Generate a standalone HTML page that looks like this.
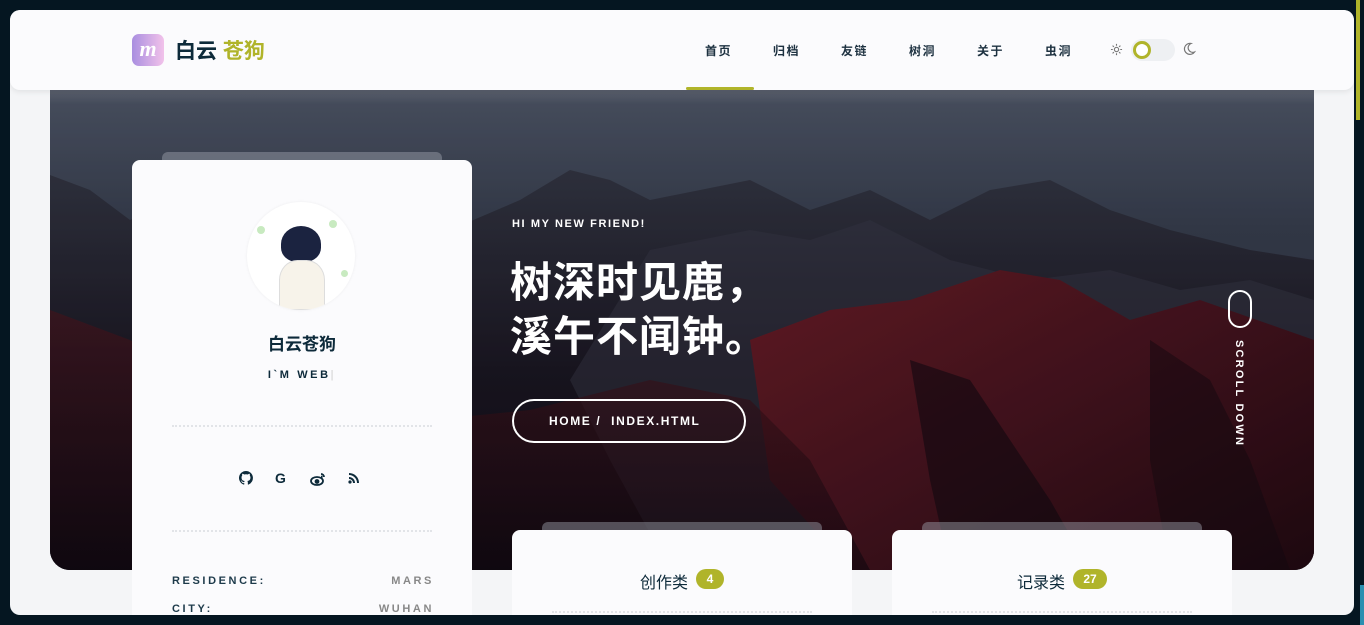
<!DOCTYPE html>
<html><head><meta charset="utf-8"><style>
*{margin:0;padding:0;box-sizing:border-box}
body{width:1364px;height:625px;overflow:hidden;background:#051621;font-family:"Liberation Sans","Noto Sans CJK SC",sans-serif;position:relative}
.page{position:absolute;left:10px;top:10px;width:1344px;height:605px;background:#f4f5f7;border-radius:10px;overflow:hidden}
.hero{position:absolute;left:40px;top:70px;width:1264px;height:490px;border-radius:0 0 20px 20px;overflow:hidden;background:#1a1822}
.hdr{position:absolute;left:0;top:0;width:1344px;height:80px;background:#fbfbfd;border-radius:10px;box-shadow:0 2px 6px rgba(0,0,0,.08)}
.logo{position:absolute;left:122px;top:24px;width:32px;height:32px;border-radius:7px;background:linear-gradient(90deg,#a98ee0,#f2c2ea);color:#fff;font:italic bold 22px "Liberation Serif",serif;text-align:center;line-height:30px}
.brand{position:absolute;left:165px;top:25px;font-size:21px;font-weight:bold;color:#0d2a3a}
.brand span{color:#b0b42a}
.nav a{position:absolute;top:32px;font-size:12px;color:#1d3140;letter-spacing:1.5px;text-decoration:none;font-weight:bold}
.ul{position:absolute;left:676px;top:77px;width:68px;height:3px;background:#b0b42a;border-radius:2px}
.tog{position:absolute;left:1121px;top:29px;width:44px;height:22px;border-radius:11px;background:#eef0f3}
.tog i{position:absolute;left:2px;top:2px;width:18px;height:18px;border-radius:50%;border:3px solid #b0b42a;background:#fff}
.card{position:absolute;background:#fbfbfd;border-radius:8px}
.ghost{position:absolute;background:rgba(160,165,175,.45);border-radius:6px 6px 0 0}
.dot{position:absolute;border-top:2px dotted #e2e4e8}
.lab{position:absolute;font-size:11px;font-weight:bold;letter-spacing:2.6px}
</style></head><body>
<div class="page">
<div class="hero">
<svg width="1264" height="490" viewBox="0 0 1264 490">
<defs>
<linearGradient id="sky" x1="0" y1="0" x2="0" y2="1"><stop offset="0" stop-color="#7a808e"/><stop offset=".05" stop-color="#50586a"/><stop offset=".3" stop-color="#3a4152"/><stop offset="1" stop-color="#2a2e3c"/></linearGradient>
<linearGradient id="mt" x1="0" y1="0" x2="0" y2="1"><stop offset="0" stop-color="#353846"/><stop offset=".5" stop-color="#1c1824"/><stop offset="1" stop-color="#0e0b13"/></linearGradient>
<linearGradient id="red" x1="0" y1="0" x2="1" y2="1"><stop offset="0" stop-color="#6e1e28"/><stop offset=".5" stop-color="#481420"/><stop offset="1" stop-color="#220a12"/></linearGradient>
<linearGradient id="red2" x1="0" y1="0" x2="0" y2="1"><stop offset="0" stop-color="#4e1620"/><stop offset="1" stop-color="#140912"/></linearGradient>
</defs>
<rect width="1264" height="490" fill="url(#sky)"/>
<path d="M0 95 L40 110 L80 140 L130 120 L200 150 L300 170 L400 150 L470 120 L520 90 L560 100 L600 120 L650 110 L700 100 L760 130 L820 110 L880 140 L940 110 L1000 100 L1060 130 L1120 150 L1200 170 L1264 180 L1264 490 L0 490Z" fill="url(#mt)"/>
<path d="M600 170 L700 150 L760 160 L820 140 L900 180 L980 200 L1060 190 L1130 210 L1200 200 L1264 220 L1264 490 L620 490 L560 380 L520 300Z" fill="#3a3a4a" opacity=".5"/>
<path d="M700 260 L780 230 L860 220 L950 190 L1010 200 L1080 240 L1150 220 L1264 260 L1264 490 L800 490 L720 400Z" fill="url(#red)"/>
<path d="M0 230 L80 260 L150 300 L250 330 L380 340 L480 330 L600 300 L700 320 L760 380 L820 490 L0 490Z" fill="url(#red2)" opacity=".65"/>
<path d="M860 280 L920 300 L960 360 L1000 420 L1040 490 L900 490 L880 400Z" fill="#120a12" opacity=".6"/>
<path d="M1100 260 L1160 300 L1200 380 L1240 490 L1120 490 L1100 380Z" fill="#150a12" opacity=".5"/>
<rect width="1264" height="490" fill="#000" opacity=".15"/>
</svg>
</div>
<div class="hdr">
<div class="logo">m</div>
<div class="brand">白云 <span>苍狗</span></div>
<div class="nav">
<a style="left:695px">首页</a><a style="left:763px">归档</a><a style="left:831px">友链</a><a style="left:899px">树洞</a><a style="left:967px">关于</a><a style="left:1035px">虫洞</a>
</div>
<div class="ul"></div>
<svg style="position:absolute;left:1100px;top:33px" width="13" height="13" viewBox="0 0 14 14" fill="none" stroke="#777" stroke-width="1.2"><circle cx="7" cy="7" r="2.3"/><path d="M7 1v2M7 11v2M1 7h2M11 7h2M2.8 2.8l1.4 1.4M9.8 9.8l1.4 1.4M2.8 11.2l1.4-1.4M9.8 4.2l1.4-1.4"/></svg>
<div class="tog"><i></i></div>
<svg style="position:absolute;left:1172px;top:32px" width="14" height="14" viewBox="0 0 14 14" fill="none" stroke="#777" stroke-width="1.2"><path d="M9 1.5A5.5 5.5 0 1 0 12.5 10 4.5 4.5 0 0 1 9 1.5z"/></svg>
</div>

<div class="ghost" style="left:152px;top:142px;width:280px;height:12px"></div>
<div class="card" style="left:122px;top:150px;width:340px;height:470px"></div>
<div style="position:absolute;left:237px;top:192px;width:108px;height:108px;border-radius:50%;background:#fff;box-shadow:0 0 3px rgba(0,0,0,.06);overflow:hidden">
<div style="position:absolute;left:34px;top:24px;width:40px;height:36px;border-radius:50% 50% 40% 40%;background:#1b2340"></div>
<div style="position:absolute;left:32px;top:58px;width:46px;height:50px;border-radius:40% 40% 0 0;background:#f7f3ea;border:1px solid #ddd"></div>
<div style="position:absolute;left:10px;top:24px;width:8px;height:8px;border-radius:50%;background:#c8eac0"></div>
<div style="position:absolute;left:82px;top:18px;width:8px;height:8px;border-radius:50%;background:#c8eac0"></div>
<div style="position:absolute;left:94px;top:68px;width:7px;height:7px;border-radius:50%;background:#c8eac0"></div>
</div>
<div style="position:absolute;left:122px;top:320px;width:340px;text-align:center;font-size:17px;font-weight:bold;color:#0d2a3a">白云苍狗</div>
<div style="position:absolute;left:122px;top:359px;width:340px;text-align:center;font-size:11px;font-weight:bold;color:#0d2a3a;letter-spacing:2.6px">I`M WEB<span style="color:#ccc;font-weight:normal">|</span></div>
<div class="dot" style="left:162px;top:415px;width:260px"></div>
<svg style="position:absolute;left:229px;top:461px" width="14" height="14" viewBox="0 0 16 16" fill="#0d2a3a"><path d="M8 0a8 8 0 0 0-2.5 15.6c.4 0 .5-.2.5-.4v-1.5c-2.2.5-2.7-1-2.7-1-.4-.9-.9-1.2-.9-1.2-.7-.5.1-.5.1-.5.8.1 1.2.8 1.2.8.7 1.3 1.9.9 2.3.7.1-.5.3-.9.5-1.1-1.8-.2-3.6-.9-3.6-4 0-.9.3-1.6.8-2.1-.1-.2-.4-1 .1-2.1 0 0 .7-.2 2.2.8a7.5 7.5 0 0 1 4 0c1.5-1 2.2-.8 2.2-.8.4 1.1.2 1.9.1 2.1.5.6.8 1.3.8 2.1 0 3.1-1.9 3.8-3.6 4 .3.3.6.8.6 1.5v2.2c0 .2.1.5.6.4A8 8 0 0 0 8 0z"/></svg>
<div style="position:absolute;left:265px;top:460px;font-size:14px;font-weight:bold;color:#0d2a3a">G</div>
<svg style="position:absolute;left:300px;top:462px" width="16" height="14" viewBox="0 0 16 14" fill="none" stroke="#0d2a3a" stroke-width="1.8"><ellipse cx="7" cy="9" rx="6" ry="4"/><circle cx="7" cy="9.5" r="1.5" fill="#0d2a3a"/><path d="M11 2a3 3 0 0 1 3 3M11 4.5a1 1 0 0 1 1 1"/></svg>
<svg style="position:absolute;left:338px;top:462px" width="12" height="12" viewBox="0 0 12 12" fill="#0d2a3a"><circle cx="2" cy="10" r="1.6"/><path d="M1 5a6 6 0 0 1 6 6H5a4 4 0 0 0-4-4zM1 1a10 10 0 0 1 10 10H9a8 8 0 0 0-8-8z"/></svg>
<div class="dot" style="left:162px;top:520px;width:260px"></div>
<div class="lab" style="left:162px;top:565px;color:#1d3a4a">RESIDENCE:</div>
<div class="lab" style="left:362px;top:565px;width:62px;text-align:right;color:#888">MARS</div>
<div class="lab" style="left:162px;top:593px;color:#1d3a4a">CITY:</div>
<div class="lab" style="left:342px;top:593px;width:82px;text-align:right;color:#888">WUHAN</div>

<div style="position:absolute;left:502px;top:208px;font-size:11px;font-weight:bold;color:#fff;letter-spacing:1.6px">HI MY NEW FRIEND!</div>
<div style="position:absolute;left:500px;top:246px;font-size:42px;font-weight:bold;color:#fff;line-height:54px;letter-spacing:1px">树深时见鹿，<br>溪午不闻钟。</div>
<div style="position:absolute;left:502px;top:389px;width:234px;height:44px;border:2px solid #fff;border-radius:22px;color:#fff;font-size:12px;font-weight:bold;letter-spacing:1.6px;line-height:40px;padding-left:35px">HOME / &nbsp;INDEX.HTML</div>
<div style="position:absolute;left:1218px;top:280px;width:24px;height:38px;border:2px solid #fff;border-radius:12px"></div>
<div style="position:absolute;left:1223px;top:330px;writing-mode:vertical-rl;color:#fff;font-size:11px;font-weight:bold;letter-spacing:2.2px">SCROLL DOWN</div>

<div class="ghost" style="left:532px;top:512px;width:280px;height:12px"></div>
<div class="card" style="left:502px;top:520px;width:340px;height:100px"></div>
<div style="position:absolute;left:630px;top:559px;font-size:16px;color:#0d2a3a">创作类</div>
<div style="position:absolute;left:686px;top:559px;width:28px;height:20px;border-radius:10px;background:#b0b42a;color:#fff;font-size:12px;font-weight:bold;text-align:center;line-height:20px">4</div>
<div class="dot" style="left:542px;top:601px;width:260px"></div>
<div class="ghost" style="left:912px;top:512px;width:280px;height:12px"></div>
<div class="card" style="left:882px;top:520px;width:340px;height:100px"></div>
<div style="position:absolute;left:1007px;top:559px;font-size:16px;color:#0d2a3a">记录类</div>
<div style="position:absolute;left:1063px;top:559px;width:34px;height:20px;border-radius:10px;background:#b0b42a;color:#fff;font-size:12px;font-weight:bold;text-align:center;line-height:20px">27</div>
<div class="dot" style="left:922px;top:601px;width:260px"></div>
</div>
<div style="position:absolute;left:1356px;top:0;width:4px;height:120px;background:#b0b42a"></div>
<div style="position:absolute;left:1360px;top:585px;width:4px;height:40px;background:#2a8fb0"></div>
</body></html>
